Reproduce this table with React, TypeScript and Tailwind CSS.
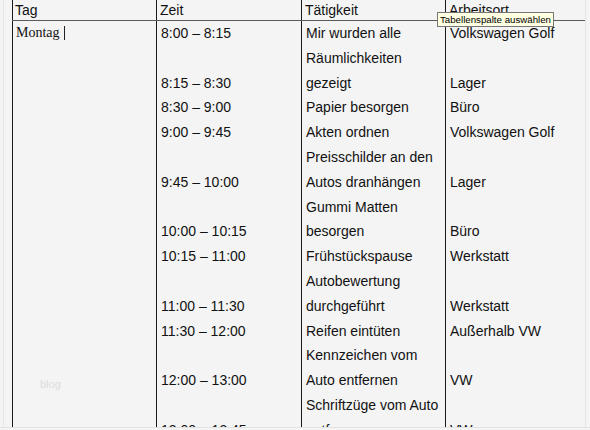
const lines: [string, string, string][] = [
  ["8:00 – 8:15", "Mir wurden alle", "Volkswagen Golf"],
  ["", "Räumlichkeiten", ""],
  ["8:15 – 8:30", "gezeigt", "Lager"],
  ["8:30 – 9:00", "Papier besorgen", "Büro"],
  ["9:00 – 9:45", "Akten ordnen", "Volkswagen Golf"],
  ["", "Preisschilder an den", ""],
  ["9:45 – 10:00", "Autos dranhängen", "Lager"],
  ["", "Gummi Matten", ""],
  ["10:00 – 10:15", "besorgen", "Büro"],
  ["10:15 – 11:00", "Frühstückspause", "Werkstatt"],
  ["", "Autobewertung", ""],
  ["11:00 – 11:30", "durchgeführt", "Werkstatt"],
  ["11:30 – 12:00", "Reifen eintüten", "Außerhalb VW"],
  ["", "Kennzeichen vom", ""],
  ["12:00 – 13:00", "Auto entfernen", "VW"],
  ["", "Schriftzüge vom Auto", ""],
  ["13:00 – 13:45", "entfernen", "VW"],
];

export default function App() {
  return (
    <div className="w-[590px] h-[430px] bg-[#f4f4f4] overflow-hidden relative font-['Liberation_Sans',Arial,sans-serif] text-[14px] text-[#111]">
      <div className="h-[428px] overflow-hidden border-b border-[#e2e2e2] flex">
        <div className="w-[4px] shrink-0 border-r border-[#e6e6e6]" />
        <div className="flex-1 pl-[8px] flex flex-col">
          {/* header */}
          <div className="flex h-[21px] border-b border-[#5a5a5a] leading-[20px] shrink-0">
            <div className="w-[144px] border-l border-[#1a1a1a] pl-[2px]">Tag</div>
            <div className="w-[145px] border-l border-[#1a1a1a] pl-[3px]">Zeit</div>
            <div className="w-[144px] border-l border-[#1a1a1a] pl-[3px]">Tätigkeit</div>
            <div className="flex-1 border-l border-[#1a1a1a] pl-[3px]">Arbeitsort</div>
          </div>
          {/* body */}
          <div className="flex flex-1">
            <div className="w-[144px] border-l border-[#1a1a1a] pl-[3px] relative">
              <div className="leading-[24.8px] font-['Liberation_Serif','Times_New_Roman',serif] flex items-center">
                Montag
                <span className="inline-block w-[1px] h-[14px] bg-[#222] ml-[4px]" />
              </div>
              <div className="absolute left-[27px] top-[355px] text-[11px] text-[#dcdcdc]">blog</div>
            </div>
            <div className="flex-1 flex flex-col">
              {lines.map(([z, t, o], i) => (
                <div key={i} className="flex leading-[24.8px] h-[24.8px] shrink-0">
                  <div className="w-[145px] border-l border-[#1a1a1a] pl-[4px] whitespace-nowrap">{z}</div>
                  <div className="w-[144px] border-l border-[#1a1a1a] pl-[4px] whitespace-nowrap">{t}</div>
                  <div className="flex-1 border-l border-[#1a1a1a] pl-[4px] whitespace-nowrap">{o}</div>
                </div>
              ))}
            </div>
          </div>
        </div>
        <div className="w-[5px] shrink-0 border-l border-[#e4e4e4]" />
      </div>
      <div className="absolute left-[437px] top-[12px] h-[15px] px-[2px] bg-[#ffffe1] border border-[#767676] text-[9.7px] leading-[13px] text-black whitespace-nowrap font-['Liberation_Sans',sans-serif]">
        Tabellenspalte auswählen
      </div>
    </div>
  );
}
